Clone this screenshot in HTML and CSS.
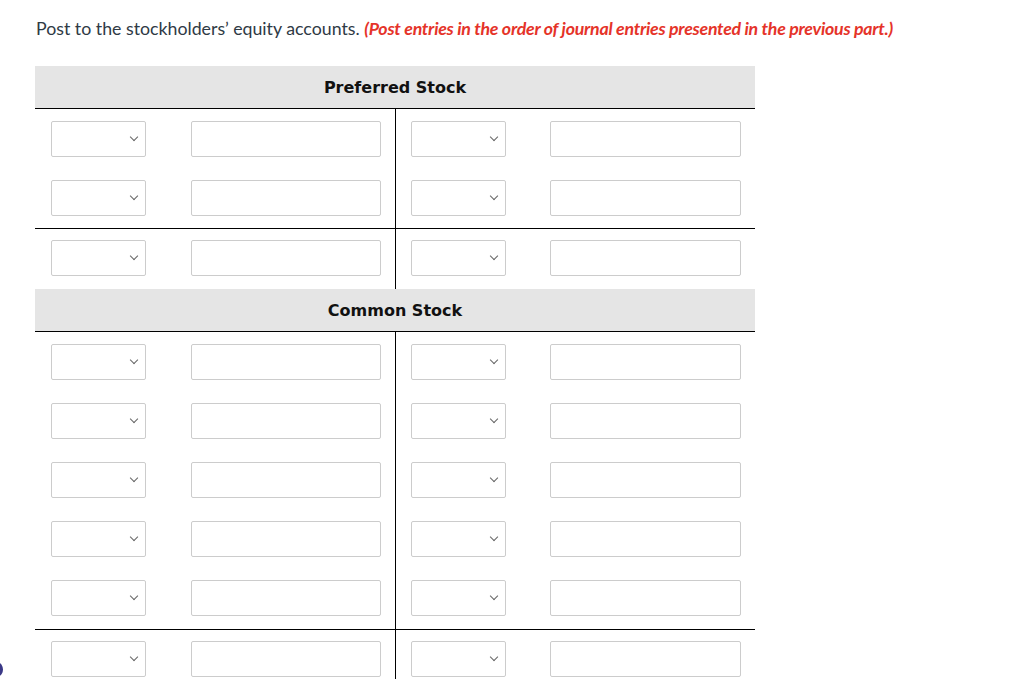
FILE: index.html
```html
<!DOCTYPE html>
<html>
<head>
<meta charset="utf-8">
<link rel="stylesheet" href="styles.css">
</head>
<body>
<p class="prompt">Post to the stockholders’ equity accounts. <span class="note">(Post entries in the order of journal entries presented in the previous part.)</span></p>

<div class="ledger">
  <div class="ledger-head">Preferred Stock</div>
  <div class="ledger-body">
    <div class="side">
      <div class="row"><span class="sel"></span><span class="inp"></span></div>
      <div class="row"><span class="sel"></span><span class="inp"></span></div>
      <div class="row total"><span class="sel"></span><span class="inp"></span></div>
    </div>
    <div class="side right">
      <div class="row"><span class="sel"></span><span class="inp"></span></div>
      <div class="row"><span class="sel"></span><span class="inp"></span></div>
      <div class="row total"><span class="sel"></span><span class="inp"></span></div>
    </div>
  </div>
  <div class="ledger-head">Common Stock</div>
  <div class="ledger-body">
    <div class="side">
      <div class="row"><span class="sel"></span><span class="inp"></span></div>
      <div class="row"><span class="sel"></span><span class="inp"></span></div>
      <div class="row"><span class="sel"></span><span class="inp"></span></div>
      <div class="row"><span class="sel"></span><span class="inp"></span></div>
      <div class="row"><span class="sel"></span><span class="inp"></span></div>
      <div class="row total long"><span class="sel"></span><span class="inp"></span></div>
    </div>
    <div class="side right">
      <div class="row"><span class="sel"></span><span class="inp"></span></div>
      <div class="row"><span class="sel"></span><span class="inp"></span></div>
      <div class="row"><span class="sel"></span><span class="inp"></span></div>
      <div class="row"><span class="sel"></span><span class="inp"></span></div>
      <div class="row"><span class="sel"></span><span class="inp"></span></div>
      <div class="row total long"><span class="sel"></span><span class="inp"></span></div>
    </div>
  </div>
</div>
<div class="edge-blob"></div>
</body>
</html>
```

FILE: styles.css
```css
html, body {
  margin: 0;
  padding: 0;
  background: #fff;
  overflow: hidden;
}
body {
  width: 1024px;
  height: 679px;
  position: relative;
  font-family: Lato, "Liberation Sans", sans-serif;
}
.prompt {
  margin: 0;
  padding: 16px 0 0 36px;
  font-size: 17.75px;
  line-height: 24px;
  color: #2f3a45;
  height: 47px;
  box-sizing: border-box;
}
.note {
  color: #e53329;
  font-style: italic;
  font-weight: 700;
  letter-spacing: -0.25px;
}
.ledger {
  margin-left: 35px;
  width: 720px;
}
.ledger-head {
  background: #e5e5e5;
  height: 41px;
  border-bottom: 1px solid #000;
  font-family: "DejaVu Sans", Verdana, sans-serif;
  font-weight: 700;
  font-size: 16px;
  color: #111;
  display: flex;
  align-items: center;
  justify-content: center;
  padding-top: 1px;
  box-sizing: content-box;
}
.ledger-head:first-child {
  margin-top: 19px;
}
.ledger-body {
  display: flex;
}
.side {
  width: 360px;
  border-right: 1px solid #000;
}
.side.right {
  width: 359px;
  border-right: none;
}
.row {
  height: 59px;
  display: flex;
  align-items: flex-start;
  padding: 12px 0 0 16px;
  box-sizing: border-box;
  gap: 45px;
}
.side.right .row {
  padding-left: 15px;
  gap: 44px;
}
.row.total {
  border-top: 1px solid #000;
  height: 61px;
  padding-top: 11px;
  margin-top: 1px;
}
.row.total.long {
  margin-top: 2px;
}
.sel, .inp {
  display: block;
  height: 36px;
  border: 1px solid #ccc;
  border-radius: 2px;
  box-sizing: border-box;
  background: #fff;
}
.sel {
  width: 95px;
  position: relative;
}
.sel::after {
  content: "";
  position: absolute;
  right: 8px;
  top: 12px;
  width: 5px;
  height: 5px;
  border-right: 1px solid #666;
  border-bottom: 1px solid #666;
  transform: rotate(45deg);
}
.inp {
  width: 190px;
}
.side.right .inp {
  width: 191px;
}
.edge-blob {
  position: absolute;
  left: -6px;
  top: 663px;
  width: 9px;
  height: 13px;
  border-radius: 50%;
  background: #3b3987;
}
```
